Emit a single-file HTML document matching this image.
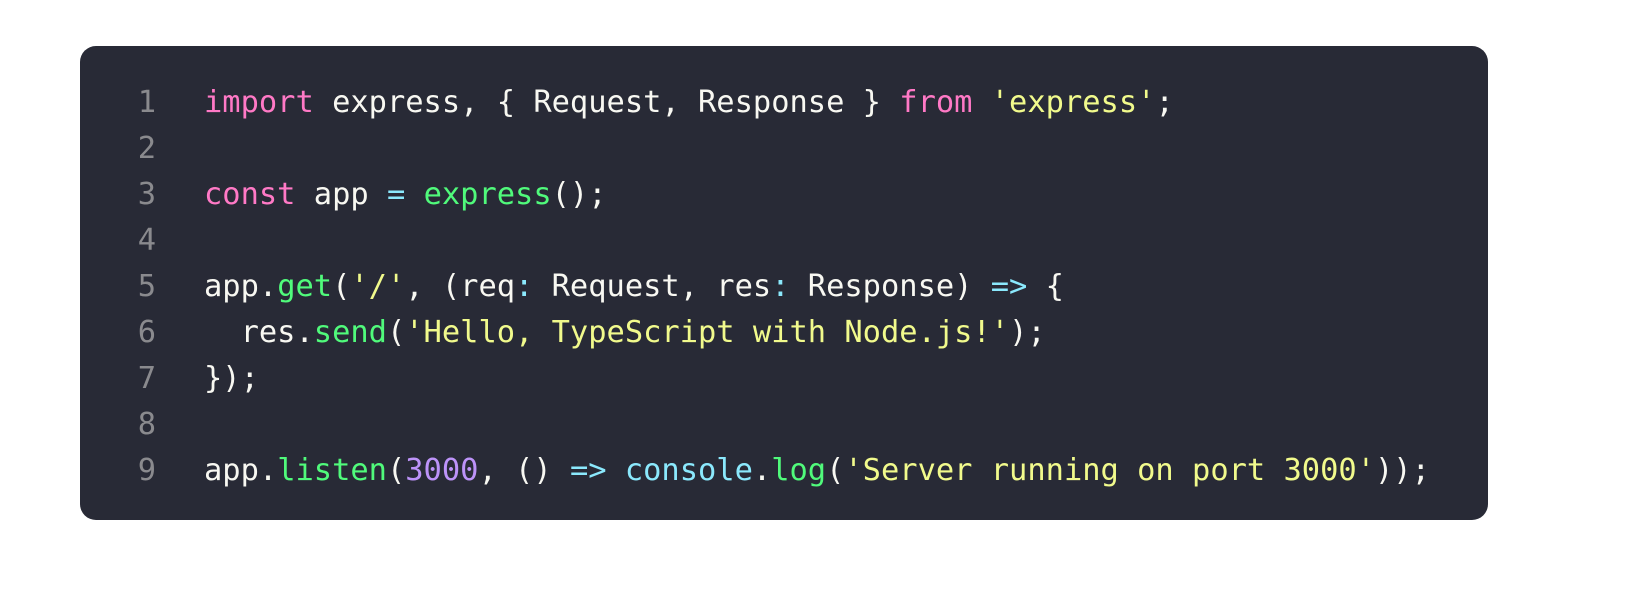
<!DOCTYPE html>
<html><head><meta charset="utf-8"><style>
html,body{margin:0;padding:0;background:#fff;width:1638px;height:595px;overflow:hidden}
.card{position:absolute;left:80px;top:46px;width:1408px;height:474px;background:#282a36;border-radius:16px}
pre{margin:0;position:absolute;left:0;top:34px;font-family:"DejaVu Sans Mono",monospace;font-size:30.4px;line-height:46px;color:#f8f8f2;white-space:pre}
.n{display:inline-block;width:76px;text-align:right;color:#8a8a8e;margin-right:48px}
.k{color:#ff79c6}.s{color:#f1fa8c}.f{color:#50fa7b}.o{color:#8be9fd}.c{color:#8be9fd}.p{color:#bd93f9}
</style></head><body><div class="card"><pre>
<span class="n">1</span><span class="k">import</span> express, { Request, Response } <span class="k">from</span> <span class="s">'express'</span>;
<span class="n">2</span>
<span class="n">3</span><span class="k">const</span> app <span class="o">=</span> <span class="f">express</span>();
<span class="n">4</span>
<span class="n">5</span>app.<span class="f">get</span>(<span class="s">'/'</span>, (req<span class="o">:</span> Request, res<span class="o">:</span> Response) <span class="o">=&gt;</span> {
<span class="n">6</span>  res.<span class="f">send</span>(<span class="s">'Hello, TypeScript with Node.js!'</span>);
<span class="n">7</span>});
<span class="n">8</span>
<span class="n">9</span>app.<span class="f">listen</span>(<span class="p">3000</span>, () <span class="o">=&gt;</span> <span class="c">console</span>.<span class="f">log</span>(<span class="s">'Server running on port 3000'</span>));</pre></div></body></html>
